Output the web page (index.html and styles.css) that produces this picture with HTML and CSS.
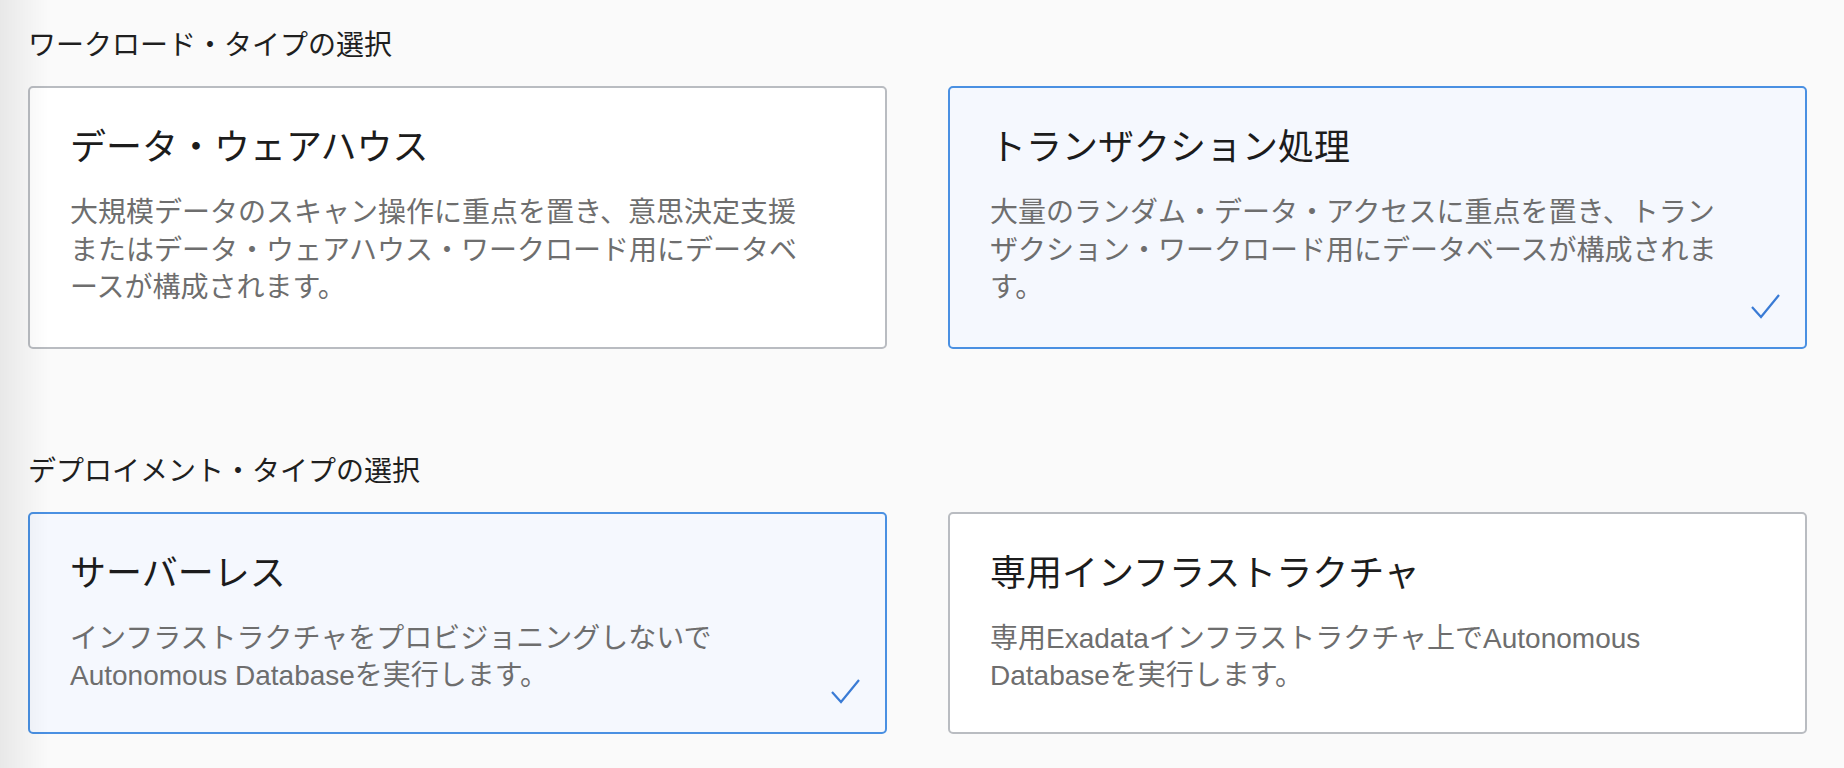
FILE: index.html
```html
<!DOCTYPE html>
<html lang="ja">
<head>
<meta charset="utf-8">
<title>Autonomous Database</title>
<link rel="stylesheet" href="styles.css">
</head>
<body>
<div class="page">
  <section class="section">
    <h2 class="section-title">ワークロード・タイプの選択</h2>
    <div class="options">
      <div class="option">
        <div class="option-title">データ・ウェアハウス</div>
        <p class="option-desc">大規模データのスキャン操作に重点を置き、意思決定支援またはデータ・ウェアハウス・ワークロード用にデータベースが構成されます。</p>
      </div>
      <div class="option selected">
        <div class="option-title">トランザクション処理</div>
        <p class="option-desc">大量のランダム・データ・アクセスに重点を置き、トランザクション・ワークロード用にデータベースが構成されます。</p>
        <svg class="check" viewBox="0 0 30 26" width="30" height="26" aria-hidden="true"><polyline points="2,14 11,24 29,2" fill="none" stroke="#3a7bd5" stroke-width="2.2" stroke-linejoin="miter"/></svg>
      </div>
    </div>
  </section>
  <section class="section second">
    <h2 class="section-title">デプロイメント・タイプの選択</h2>
    <div class="options">
      <div class="option selected">
        <div class="option-title">サーバーレス</div>
        <p class="option-desc">インフラストラクチャをプロビジョニングしないでAutonomous Databaseを実行します。</p>
        <svg class="check" viewBox="0 0 30 26" width="30" height="26" aria-hidden="true"><polyline points="2,14 11,24 29,2" fill="none" stroke="#3a7bd5" stroke-width="2.2" stroke-linejoin="miter"/></svg>
      </div>
      <div class="option">
        <div class="option-title">専用インフラストラクチャ</div>
        <p class="option-desc">専用Exadataインフラストラクチャ上でAutonomous Databaseを実行します。</p>
      </div>
    </div>
  </section>
</div>
<div class="edge-shadow"></div>
</body>
</html>
```
FILE: styles.css
```css
html, body {
  margin: 0;
  padding: 0;
  background: #fafafa;
  font-family: "Liberation Sans", "Noto Sans CJK JP", sans-serif;
}

.page {
  padding: 28px 37px 0 28px;
}

.section.second {
  margin-top: 105px;
}

.section-title {
  margin: 0 0 22px 0;
  font-size: 28px;
  line-height: 36px;
  font-weight: normal;
  color: #1f1f1f;
}

.options {
  display: grid;
  grid-template-columns: 1fr 1fr;
  column-gap: 61px;
}

.option {
  position: relative;
  background: #ffffff;
  border: 2px solid #b9bcc1;
  border-radius: 5px;
  padding: 38px 40px 40px 40px;
}

.section.second .option {
  padding-bottom: 37px;
}

.option.selected {
  background: #f5f8fe;
  border-color: #4a90e2;
}

.option-title {
  font-size: 36px;
  line-height: 44px;
  color: #1c1c1c;
  margin-bottom: 24px;
}

.option-desc {
  margin: 0;
  max-width: 742px;
  font-size: 28px;
  line-height: 37.5px;
  color: #6e6e6e;
}

.check {
  position: absolute;
  right: 25px;
  bottom: 28px;
}

.edge-shadow {
  position: fixed;
  left: 0;
  top: 0;
  bottom: 0;
  width: 48px;
  background: linear-gradient(to right, rgba(0, 0, 0, 0.07), rgba(0, 0, 0, 0));
  pointer-events: none;
}
```
